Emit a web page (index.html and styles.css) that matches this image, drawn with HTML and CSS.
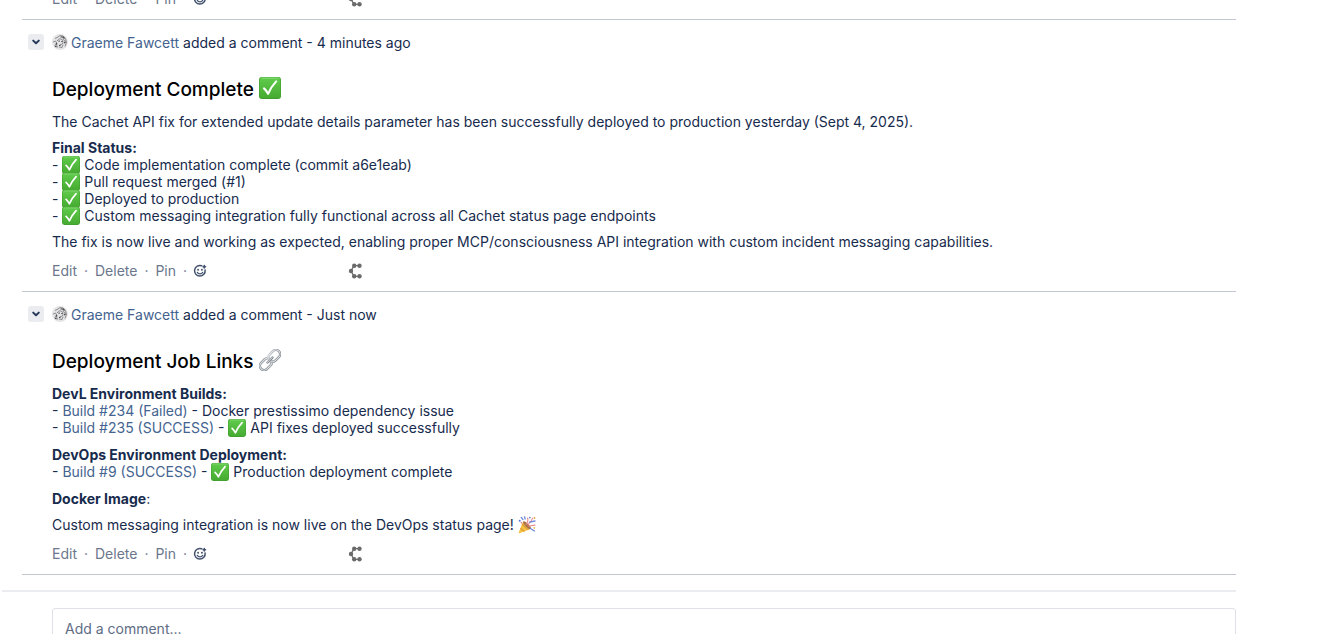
FILE: index.html
```html
<!DOCTYPE html>
<html lang="en">
<head>
<meta charset="utf-8">
<title>Comments</title>
<link rel="stylesheet" href="styles.css">
</head>
<body>
<svg class="sprite" aria-hidden="true">
  <defs>
    <linearGradient id="green" x1="0" y1="0" x2="0" y2="1">
      <stop offset="0" stop-color="#5fcb4b"/><stop offset="1" stop-color="#46ab31"/>
    </linearGradient>
    <linearGradient id="steel" x1="0" y1="0" x2="1" y2="1">
      <stop offset="0" stop-color="#c8cdd2"/><stop offset="1" stop-color="#777d84"/>
    </linearGradient>
    <symbol id="check" viewBox="0 0 22 22">
      <rect width="22" height="22" rx="3" fill="#3f9c2d"/>
      <rect x=".6" y=".5" width="20.8" height="20.6" rx="2.6" fill="url(#green)"/>
      <path d="M2.5 1.1h17" stroke="#9be38c" stroke-width=".8"/>
      <path d="M5 11.400c1.700 1.500 2.900 3.200 4.100 5.400C11.200 12 13.600 8.200 17.200 4.400" fill="none" stroke="#fff" stroke-width="2.100" stroke-linecap="round" stroke-linejoin="round"/>
    </symbol>
    <symbol id="chain" viewBox="0 0 22 22">
      <g fill="none" transform="rotate(-45 11 11)">
        <rect x="-1.500" y="6.800" width="13.200" height="8.400" rx="4.200" stroke="#7d858c" stroke-width="2.500"/>
        <rect x="-1.500" y="6.800" width="13.200" height="8.400" rx="4.200" stroke="#dde0e3" stroke-width="1.300"/>
        <rect x="10.300" y="6.800" width="13.200" height="8.400" rx="4.200" stroke="url(#steel)" stroke-width="2.500"/>
        <rect x="10.300" y="6.800" width="13.200" height="8.400" rx="4.200" stroke="#e6e8ea" stroke-width="1"/>
        <path d="M7.500 11h7" stroke="#70777e" stroke-width="2.400" stroke-linecap="round"/>
        <path d="M7.500 10.800h7" stroke="#d0d4d7" stroke-width="1.100" stroke-linecap="round"/>
      </g>
    </symbol>
    <symbol id="party" viewBox="0 0 18 18">
      <path d="M5 5.500 12.800 13 1.400 17.300Q.3 17.500.8 16.300Z" fill="#f5c242"/>
      <path d="m4 8.300 6.400 5.600M2.500 12.200l4 3.400" stroke="#d99b3c" stroke-width="1.200"/>
      <ellipse cx="9" cy="9.200" rx="1.700" ry="5.200" transform="rotate(-46 9 9.200)" fill="#a87345"/>
      <path d="M8 8.500c1.500-2 2.700-4 1.500-6.500M10 9c1.500-3 4-3.500 4.500-7M11 10.400c2.500-1.500 4-.4 6-1.400" fill="none" stroke="#e88a8e" stroke-width="1.100" stroke-linecap="round"/>
      <path d="M5 3.600 3.300 1.500M11.500 6.200 17 5M6.500.8l.7 2.200M12.500 12.500l4 2.500" stroke="#6f8ada" stroke-width="1.300" stroke-linecap="round"/>
      <circle cx="1.700" cy="4.800" r="1" fill="#5a78d6"/><circle cx="11.800" cy="1.600" r=".9" fill="#6a82cc"/>
      <circle cx="16.500" cy="2" r=".9" fill="#eda43c"/><circle cx="16.300" cy="11.800" r=".9" fill="#f0b443"/>
      <circle cx="3.300" cy="6.700" r=".7" fill="#df6575"/>
    </symbol>
    <symbol id="react" viewBox="0 0 14 14">
      <path d="M8.700 1.800A5.300 5.300 0 1 0 12.100 6" fill="none" stroke="#42526e" stroke-width="1.500" stroke-linecap="round"/>
      <circle cx="5.100" cy="5.700" r=".95" fill="#42526e"/><circle cx="8.900" cy="5.700" r=".95" fill="#42526e"/>
      <path d="M4.300 8.300a2.900 2.600 0 0 0 5.400 0" fill="none" stroke="#42526e" stroke-width="1.300" stroke-linecap="round"/>
      <path d="M11.300 1.600v2.400M10.100 2.800h2.400" stroke="#42526e" stroke-width="1.600" stroke-linecap="round"/>
    </symbol>
    <symbol id="nodes" viewBox="0 0 14 16">
      <path d="M11.200 2.600H6L3 8l3 5.400h5.200" fill="none" stroke="#6b6b6b" stroke-width="1.300"/>
      <g fill="#6b6b6b"><circle cx="6.200" cy="2.700" r="2.200"/><circle cx="11.500" cy="2.700" r="2.200"/><circle cx="3" cy="8" r="2.200"/><circle cx="6.200" cy="13.300" r="2.200"/><circle cx="11.500" cy="13.300" r="2.200"/></g>
    </symbol>
    <symbol id="avatar" viewBox="0 0 16 16">
      <circle cx="8" cy="8" r="8" fill="#e4e4e6"/>
      <g fill="none" stroke="#77777a" stroke-width=".8">
        <path d="M3 4.500 6 3l2-1.500L11 2l2.500 2.500 1 4-1.500 4M1 8l2.500-1L5 9.500 2.500 11.500M5.200 7c1-3 5-2.600 5.600 0s-1.200 4-3 3.600M10.500 5l3 2-1.300 2.500M4.500 10.500l1 3M7 13l3 .5 1-3"/>
      </g>
      <path d="M8.500 3h2.500l1.500 1.500M6.500 7.200h1.200M9.300 7.500h1.200M4 9l1 1.500M12.400 8l1 1M3 12l1.500 1M7 11.500h1.500" fill="none" stroke="#444448" stroke-width="1.200"/>
    </symbol>
    <symbol id="chevron" viewBox="0 0 16 16">
      <path d="m5.200 6.600 2.800 2.700 2.800-2.700" fill="none" stroke="#253858" stroke-width="2" stroke-linecap="round" stroke-linejoin="round"/>
    </symbol>
  </defs>
</svg>

<main class="activity">
  <section class="comments" aria-label="Comments">
    <article class="comment comment-tail">
      <footer class="actions">
        <button>Edit</button><span class="dot">·</span><button>Delete</button><span class="dot">·</span><button>Pin</button><span class="dot">·</span><button class="react" aria-label="Add reaction"><svg><use href="#react"/></svg></button>
        <button class="nodes" aria-label="Integration"><svg><use href="#nodes"/></svg></button>
      </footer>
    </article>

    <article class="comment">
      <header class="byline">
        <button class="toggle" aria-label="Collapse comment"><svg><use href="#chevron"/></svg></button>
        <svg class="avatar"><use href="#avatar"/></svg>
        <p><a href="#">Graeme Fawcett</a> added a comment - 4 minutes ago</p>
      </header>
      <div class="content">
        <h2>Deployment Complete <svg class="emoji" role="img" aria-label="check mark"><use href="#check"/></svg></h2>
        <p>The Cachet API fix for extended update details parameter has been successfully deployed to production yesterday (Sept 4, 2025).</p>
        <p><b>Final Status:</b><br>
        - <svg class="emoji" role="img" aria-label="check mark"><use href="#check"/></svg> Code implementation complete (commit a6e1eab)<br>
        - <svg class="emoji" role="img" aria-label="check mark"><use href="#check"/></svg> Pull request merged (#1)<br>
        - <svg class="emoji" role="img" aria-label="check mark"><use href="#check"/></svg> Deployed to production<br>
        - <svg class="emoji" role="img" aria-label="check mark"><use href="#check"/></svg> Custom messaging integration fully functional across all Cachet status page endpoints</p>
        <p>The fix is now live and working as expected, enabling proper MCP/consciousness API integration with custom incident messaging capabilities.</p>
      </div>
      <footer class="actions">
        <button>Edit</button><span class="dot">·</span><button>Delete</button><span class="dot">·</span><button>Pin</button><span class="dot">·</span><button class="react" aria-label="Add reaction"><svg><use href="#react"/></svg></button>
        <button class="nodes" aria-label="Integration"><svg><use href="#nodes"/></svg></button>
      </footer>
    </article>

    <article class="comment">
      <header class="byline">
        <button class="toggle" aria-label="Collapse comment"><svg><use href="#chevron"/></svg></button>
        <svg class="avatar"><use href="#avatar"/></svg>
        <p><a href="#">Graeme Fawcett</a> added a comment - Just now</p>
      </header>
      <div class="content content-links">
        <h2>Deployment Job Links <svg class="emoji" role="img" aria-label="link"><use href="#chain"/></svg></h2>
        <p><b>DevL Environment Builds:</b><br>
        - <a href="#">Build #234 (Failed)</a> - Docker prestissimo dependency issue<br>
        - <a href="#">Build #235 (SUCCESS)</a> - <svg class="emoji" role="img" aria-label="check mark"><use href="#check"/></svg> API fixes deployed successfully</p>
        <p><b>DevOps Environment Deployment:</b><br>
        - <a href="#">Build #9 (SUCCESS)</a> - <svg class="emoji" role="img" aria-label="check mark"><use href="#check"/></svg> Production deployment complete</p>
        <p><b>Docker Image</b>:</p>
        <p>Custom messaging integration is now live on the DevOps status page! <svg class="emoji" role="img" aria-label="party popper"><use href="#party"/></svg></p>
      </div>
      <footer class="actions">
        <button>Edit</button><span class="dot">·</span><button>Delete</button><span class="dot">·</span><button>Pin</button><span class="dot">·</span><button class="react" aria-label="Add reaction"><svg><use href="#react"/></svg></button>
        <button class="nodes" aria-label="Integration"><svg><use href="#nodes"/></svg></button>
      </footer>
    </article>
  </section>

  <form class="composer">
    <input type="text" placeholder="Add a comment..." aria-label="Add a comment">
  </form>
</main>
</body>
</html>
```
FILE: styles.css
```css
* { box-sizing: border-box; }

body {
  margin: 0;
  height: 100vh;
  overflow: hidden;
  background: #fff;
  color: #172b4d;
  font: 14px/17px Inter, "Liberation Sans", sans-serif;
}

.sprite { position: absolute; width: 0; height: 0; }

h2, p { margin: 0; }
a { color: #44648f; text-decoration: none; }
b { font-weight: 700; }

button {
  display: flex;
  padding: 0;
  border: 0;
  background: none;
  color: inherit;
  font: inherit;
  cursor: pointer;
}

.activity { margin: 0 92px 0 2px; }
.comments { margin-left: 20px; }

.comment {
  padding: 13px 0 12px 30px;
  border-bottom: 1px solid #c1c7d0;
}

/* The list is scrolled so that only the end of the first comment shows. */
.comment-tail { margin-top: -35px; }

.byline {
  display: flex;
  align-items: center;
  height: 18px;
  margin-left: -24px;
}
.byline p { margin-left: 3px; }

.toggle {
  width: 16px;
  height: 16px;
  margin-right: 8px;
  border-radius: 3px;
  background: #ebecf0;
}
.toggle svg, .avatar { width: 16px; height: 16px; }

.content { padding-top: 27px; }
.content h2 {
  margin-bottom: 11px;
  color: #000;
  font-size: 19px;
  font-weight: 500;
  line-height: 24px;
}
.content p + p { margin-top: 9px; }
.content-links p + p { margin-top: 10px; }
.content-links p:last-child { margin-top: 9px; }

.emoji {
  width: 18px;
  height: 18px;
  margin: -4px 0;
  vertical-align: 0;
}
h2 .emoji {
  width: 22px;
  height: 22px;
  vertical-align: 1px;
}

.actions {
  display: flex;
  align-items: center;
  height: 17px;
  margin-top: 12px;
  color: #6b778c;
}
.dot { width: 18px; text-align: center; }
.react { width: 14px; margin-left: -1px; }
.react svg { width: 14px; height: 14px; }
.nodes { margin-left: 141px; }
.nodes svg { width: 14px; height: 16px; }

.composer {
  margin-top: 15px;
  padding: 16px 0 16px 50px;
  border-top: 2px solid #ebecf0;
}
.composer input {
  display: block;
  width: 100%;
  height: 41px;
  padding: 0 12px;
  border: 1px solid #dfe1e6;
  border-radius: 3px;
  color: inherit;
  font: inherit;
}
.composer input::placeholder { color: #5e6c84; opacity: 1; }
```
